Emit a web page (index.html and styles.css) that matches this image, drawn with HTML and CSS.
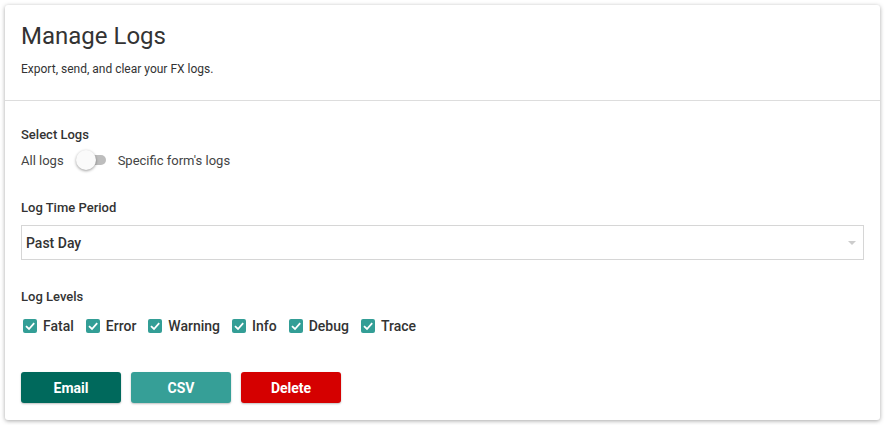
FILE: index.html
```html
<!DOCTYPE html>
<html>
<head>
  <meta charset="UTF-8">
  <title>Manage Logs</title>
  <link rel="stylesheet" href="styles.css">
</head>
<body>
<div class="card">
  <div class="card-header">
    <h1>Manage Logs</h1>
    <p>Export, send, and clear your FX logs.</p>
  </div>
  <div class="card-body">
    <div class="field">
      <div class="field-label">Select Logs</div>
      <div class="toggle-row">
        <span>All logs</span>
        <span class="toggle"><span class="track"></span><span class="thumb"></span></span>
        <span>Specific form's logs</span>
      </div>
    </div>

    <div class="field field-time">
      <div class="field-label">Log Time Period</div>
      <div class="select">
        <span>Past Day</span>
        <span class="caret"></span>
      </div>
    </div>

    <div class="field">
      <div class="field-label">Log Levels</div>
      <div class="levels">
        <label class="check"><span class="box"><svg viewBox="0 0 14 14" width="14" height="14"><path d="M3 7.2 L6 10 L11.2 4.2" fill="none" stroke="#fff" stroke-width="1.8"/></svg></span>Fatal</label>
        <label class="check"><span class="box"><svg viewBox="0 0 14 14" width="14" height="14"><path d="M3 7.2 L6 10 L11.2 4.2" fill="none" stroke="#fff" stroke-width="1.8"/></svg></span>Error</label>
        <label class="check"><span class="box"><svg viewBox="0 0 14 14" width="14" height="14"><path d="M3 7.2 L6 10 L11.2 4.2" fill="none" stroke="#fff" stroke-width="1.8"/></svg></span>Warning</label>
        <label class="check"><span class="box"><svg viewBox="0 0 14 14" width="14" height="14"><path d="M3 7.2 L6 10 L11.2 4.2" fill="none" stroke="#fff" stroke-width="1.8"/></svg></span>Info</label>
        <label class="check"><span class="box"><svg viewBox="0 0 14 14" width="14" height="14"><path d="M3 7.2 L6 10 L11.2 4.2" fill="none" stroke="#fff" stroke-width="1.8"/></svg></span>Debug</label>
        <label class="check"><span class="box"><svg viewBox="0 0 14 14" width="14" height="14"><path d="M3 7.2 L6 10 L11.2 4.2" fill="none" stroke="#fff" stroke-width="1.8"/></svg></span>Trace</label>
      </div>
    </div>

    <div class="actions">
      <button class="btn btn-email">Email</button>
      <button class="btn btn-csv">CSV</button>
      <button class="btn btn-delete">Delete</button>
    </div>
  </div>
</div>
</body>
</html>
```

FILE: styles.css
```css
body {
  margin: 0;
  padding: 5px;
  background-color: #fff;
  font-family: Roboto, "Liberation Sans", sans-serif;
  color: #333;
}

.card {
  width: 875px;
  height: 415px;
  box-sizing: border-box;
  background-color: #fff;
  border-radius: 3px;
  box-shadow: 0 1px 4px rgba(0, 0, 0, 0.35);
}

.card-header {
  height: 96px;
  padding: 16px 16px 0 16px;
  box-sizing: border-box;
  border-bottom: 1px solid #ddd;
}

.card-header h1 {
  margin: 0;
  font-size: 24px;
  font-weight: 400;
  line-height: 30px;
  color: #333;
}

.card-header p {
  margin: 10px 0 0 0;
  font-size: 12px;
  line-height: 16px;
  color: #333;
}

.card-body {
  padding: 26px 16px 0 16px;
}

.field {
  margin-bottom: 28px;
}

.field-time {
  margin-bottom: 29px;
}

.field-label {
  font-size: 13px;
  font-weight: 500;
  line-height: 16px;
  margin-bottom: 5px;
}

.toggle-row {
  display: flex;
  align-items: center;
  gap: 12px;
  font-size: 13px;
  height: 24px;
  color: #444;
}

.toggle {
  position: relative;
  width: 30px;
  height: 20px;
}

.toggle .track {
  position: absolute;
  left: 4px;
  top: 5px;
  width: 26px;
  height: 10px;
  border-radius: 5px;
  background-color: #bdbdbd;
}

.toggle .thumb {
  position: absolute;
  left: 0;
  top: 0;
  width: 20px;
  height: 20px;
  border-radius: 50%;
  background-color: #fafafa;
  box-shadow: 0 1px 3px rgba(0, 0, 0, 0.4);
}

.select {
  display: flex;
  align-items: center;
  justify-content: space-between;
  height: 35px;
  margin-top: 9px;
  box-sizing: border-box;
  border: 1px solid #d6d6d6;
  padding: 0 7px 0 4px;
  font-size: 14px;
  font-weight: 500;
  color: #333;
}

.caret {
  width: 0;
  height: 0;
  border-left: 4px solid transparent;
  border-right: 4px solid transparent;
  border-top: 4px solid #ccc;
}

.levels {
  display: flex;
  gap: 12px;
  height: 20px;
  padding-left: 2px;
  margin-top: 11px;
}

.check {
  display: flex;
  align-items: center;
  gap: 6px;
  font-size: 14px;
  font-weight: 500;
  color: #333;
}

.check .box {
  display: block;
  width: 14px;
  height: 14px;
  border-radius: 2px;
  background-color: #339e96;
}

.check svg {
  display: block;
}

.actions {
  display: flex;
  gap: 10px;
  margin-top: 36px;
}

.btn {
  width: 100px;
  height: 31px;
  border: none;
  border-radius: 3px;
  color: #fff;
  font-family: Roboto, "Liberation Sans", sans-serif;
  font-size: 14px;
  font-weight: 700;
  box-shadow: 0 1px 2px rgba(0, 0, 0, 0.25);
}

.btn-email {
  background-color: #00695c;
}

.btn-csv {
  background-color: #369f97;
}

.btn-delete {
  background-color: #d50000;
}
```
